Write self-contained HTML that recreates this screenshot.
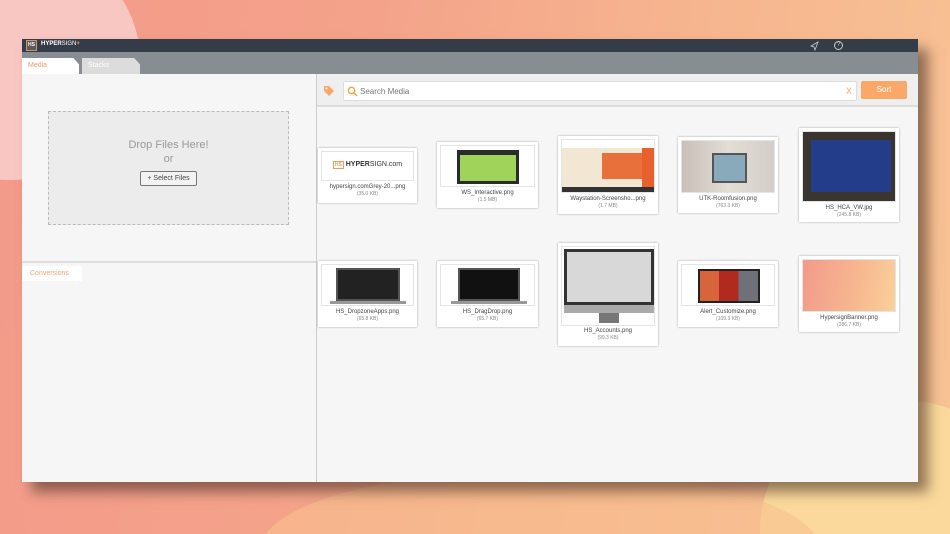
<!DOCTYPE html>
<html style="width:950px;height:534px;overflow:hidden"><head><style>
*{box-sizing:border-box;margin:0;padding:0}
body{width:950px;height:534px;overflow:hidden;position:relative;font-family:"Liberation Sans",sans-serif;}
.bg{position:absolute;left:0;top:0;width:950px;height:534px;overflow:hidden;background:linear-gradient(100deg,#f39a8a 0%,#f4a28a 35%,#f6b48e 65%,#f8c395 100%);}
.blob{position:absolute;border-radius:50%}
.win{position:absolute;left:22px;top:39px;width:896px;height:443px;background:#f6f6f6;box-shadow:10px 10px 12px rgba(60,40,30,.55)}
.hdr{position:absolute;left:0;top:0;width:896px;height:13px;background:#343c47}
.tabs{position:absolute;left:0;top:13px;width:896px;height:22px;background:#888d94}
.tab{position:absolute;top:6px;height:16px;font-size:7px;padding:4px 0 0 6px}
.card{position:absolute;background:#fff;box-shadow:0 0 2px rgba(0,0,0,.35);text-align:center;font-size:6px;color:#444}
.card .im{position:absolute;left:3px;top:3px;right:3px;border:1px solid #e4e4e4;overflow:hidden}
.card .t{position:absolute;left:0;right:0;line-height:7px}
.card .s{font-size:5px;color:#888}
</style></head><body>
<div class="bg">
<div class="blob" style="left:-120px;top:-60px;width:260px;height:240px;background:#f8c7c1"></div>
<div class="blob" style="left:760px;top:400px;width:280px;height:260px;background:#fbd99c"></div>
<div class="blob" style="left:260px;top:470px;width:560px;height:160px;background:#f8c090;opacity:.6"></div>
</div>
<div class="win">
 <div class="hdr">
  <div style="position:absolute;left:4px;top:1px;width:11px;height:11px;border:1px solid #c89a60;background:#5a5a5a;color:#fff;font-size:5px;line-height:9px;text-align:center;font-weight:bold">HS</div>
  <div style="position:absolute;left:19px;top:2px;color:#fff;font-size:6px;font-weight:bold">HYPER<span style="font-weight:normal">SIGN</span><span style="color:#f59a5b">+</span></div>
  <svg style="position:absolute;left:788px;top:2px" width="10" height="10" viewBox="0 0 10 10"><path d="M8 1L1 5l3 1 1 3z" fill="none" stroke="#ccc" stroke-width=".8"/></svg>
  <div style="position:absolute;left:812px;top:2px;width:9px;height:9px;border:1px solid #ccc;border-radius:50%;color:#ccc;font-size:6px;line-height:7px;text-align:center">?</div>
 </div>
 <div class="tabs">
  <div class="tab" style="left:0;width:57px;background:#fff;color:#f59a6b;clip-path:polygon(0 0,90% 0,100% 40%,100% 100%,0 100%)">Media</div>
  <div class="tab" style="left:60px;width:58px;background:#dcdcdc;color:#fff;clip-path:polygon(0 0,90% 0,100% 40%,100% 100%,0 100%)">Stacks</div>
 </div>
 <div style="position:absolute;left:26px;top:72px;width:241px;height:114px;background:#ececec;border:1px dashed #bbb;text-align:center;color:#999">
  <div style="margin-top:27px;font-size:11px">Drop Files Here!</div>
  <div style="font-size:11px;margin-top:2px">or</div>
  <div style="display:inline-block;margin-top:6px;border:1px solid #777;background:#f3f3f3;color:#444;font-size:7px;padding:3px 6px;border-radius:2px">+ Select Files</div>
 </div>
 <div style="position:absolute;left:0;top:222px;width:294px;height:2px;background:#ddd"></div>
 <div style="position:absolute;left:0;top:227px;width:60px;height:15px;background:#fff;color:#f5a27b;font-size:7px;padding:4px 0 0 8px">Conversions</div>
 <div style="position:absolute;left:294px;top:35px;width:1px;height:408px;background:#ccc"></div>
 <div style="position:absolute;left:295px;top:35px;width:601px;height:33px;background:#efefef;border-bottom:2px solid #ddd"></div>
 <svg style="position:absolute;left:301px;top:46px" width="12" height="12" viewBox="0 0 12 12"><path d="M1 1h5l5 5-5 5-5-5z" fill="#f9a868"/><circle cx="3.5" cy="3.5" r="1" fill="#fff"/></svg>
 <div style="position:absolute;left:321px;top:42px;width:514px;height:20px;background:#fff;border:1px solid #ddd;border-radius:2px">
  <svg style="position:absolute;left:3px;top:4px" width="11" height="11" viewBox="0 0 11 11"><circle cx="4.5" cy="4.5" r="3.2" fill="none" stroke="#f5a040" stroke-width="1.3"/><path d="M7 7l3 3" stroke="#f5a040" stroke-width="1.4"/></svg>
  <div style="position:absolute;left:16px;top:5px;font-size:8px;color:#777">Search Media</div>
  <div style="position:absolute;right:4px;top:4px;font-size:9px;color:#f9a868">X</div>
 </div>
 <div style="position:absolute;left:839px;top:42px;width:46px;height:18px;background:#f9a868;border-radius:2px;color:#fff;font-size:8px;text-align:center;line-height:17px">Sort</div>

 <div class="card" style="left:296px;top:109px;width:99px;height:55px"><div class="im" style="height:30px;background:#fff"><div style="margin-top:9px;font-size:7px;font-weight:bold;color:#333"><span style="border:1px solid #f59a5b;color:#f59a5b;font-size:5px;padding:0 1px">HS</span> HYPER<span style="font-weight:normal">SIGN.com</span></div></div><div class="t" style="top:36px">hypersign.comGrey-20...png<br><span class="s">(35.0 KB)</span></div></div>
 <div class="card" style="left:415px;top:103px;width:101px;height:66px"><div class="im" style="height:42px;background:#fff"><div style="position:absolute;left:16px;top:4px;width:62px;height:34px;background:#2b2b2b;padding:5px 3px 3px"><div style="width:100%;height:100%;background:#9fd35a"></div></div></div><div class="t" style="top:48px">WS_Interactive.png<br><span class="s">(1.5 MB)</span></div></div>
 <div class="card" style="left:536px;top:97px;width:100px;height:78px"><div class="im" style="height:54px;background:#f2e7d2"><div style="height:8px;background:#fff"></div><div style="position:absolute;left:40px;top:13px;width:40px;height:26px;background:#e8703a"></div><div style="position:absolute;right:0;top:8px;width:12px;height:40px;background:#e8602e"></div><div style="position:absolute;bottom:0;left:0;right:0;height:5px;background:#333"></div></div><div class="t" style="top:60px">Waystation-Screensho...png<br><span class="s">(1.7 MB)</span></div></div>
 <div class="card" style="left:656px;top:98px;width:100px;height:76px"><div class="im" style="height:53px;background:linear-gradient(90deg,#c8c0b8,#e3ddd6 50%,#d4cec8)"><div style="position:absolute;left:30px;top:12px;width:35px;height:30px;background:#8ab;border:2px solid #555"></div></div><div class="t" style="top:59px">UTK-Roomfusion.png<br><span class="s">(763.3 KB)</span></div></div>
 <div class="card" style="left:777px;top:89px;width:100px;height:94px"><div class="im" style="height:71px;background:#3b3530"><div style="position:absolute;left:8px;top:8px;width:80px;height:52px;background:#243d8a"></div></div><div class="t" style="top:77px">HS_HCA_VW.jpg<br><span class="s">(245.8 KB)</span></div></div>
 <div class="card" style="left:296px;top:222px;width:99px;height:66px"><div class="im" style="height:42px;background:#fff"><div style="position:absolute;left:14px;top:3px;width:64px;height:33px;background:#222;border:2px solid #555"></div><div style="position:absolute;left:8px;top:36px;width:76px;height:3px;background:#999"></div></div><div class="t" style="top:48px">HS_DropzoneApps.png<br><span class="s">(65.8 KB)</span></div></div>
 <div class="card" style="left:415px;top:222px;width:101px;height:66px"><div class="im" style="height:42px;background:#fff"><div style="position:absolute;left:17px;top:3px;width:62px;height:33px;background:#111;border:2px solid #555"></div><div style="position:absolute;left:10px;top:36px;width:76px;height:3px;background:#999"></div></div><div class="t" style="top:48px">HS_DragDrop.png<br><span class="s">(65.7 KB)</span></div></div>
 <div class="card" style="left:536px;top:204px;width:100px;height:103px"><div class="im" style="height:80px;background:#fff"><div style="position:absolute;left:2px;top:2px;width:90px;height:56px;background:#d8d8d8;border:3px solid #333"></div><div style="position:absolute;left:2px;top:58px;width:90px;height:8px;background:#aaa"></div><div style="position:absolute;left:37px;top:66px;width:20px;height:10px;background:#777"></div></div><div class="t" style="top:85px">HS_Accounts.png<br><span class="s">(99.3 KB)</span></div></div>
 <div class="card" style="left:656px;top:222px;width:100px;height:66px"><div class="im" style="height:42px;background:#fff"><div style="position:absolute;left:16px;top:4px;width:62px;height:34px;background:linear-gradient(90deg,#d8643b 0 33%,#b02a20 33% 66%,#6f7078 66%);border:2px solid #222"></div></div><div class="t" style="top:48px">Alert_Customize.png<br><span class="s">(109.3 KB)</span></div></div>
 <div class="card" style="left:777px;top:217px;width:100px;height:76px"><div class="im" style="height:53px;background:linear-gradient(100deg,#f29a8a,#f7b890 60%,#fad19a)"></div><div class="t" style="top:59px">HypersignBanner.png<br><span class="s">(286.7 KB)</span></div></div>
</div>
</body></html>
